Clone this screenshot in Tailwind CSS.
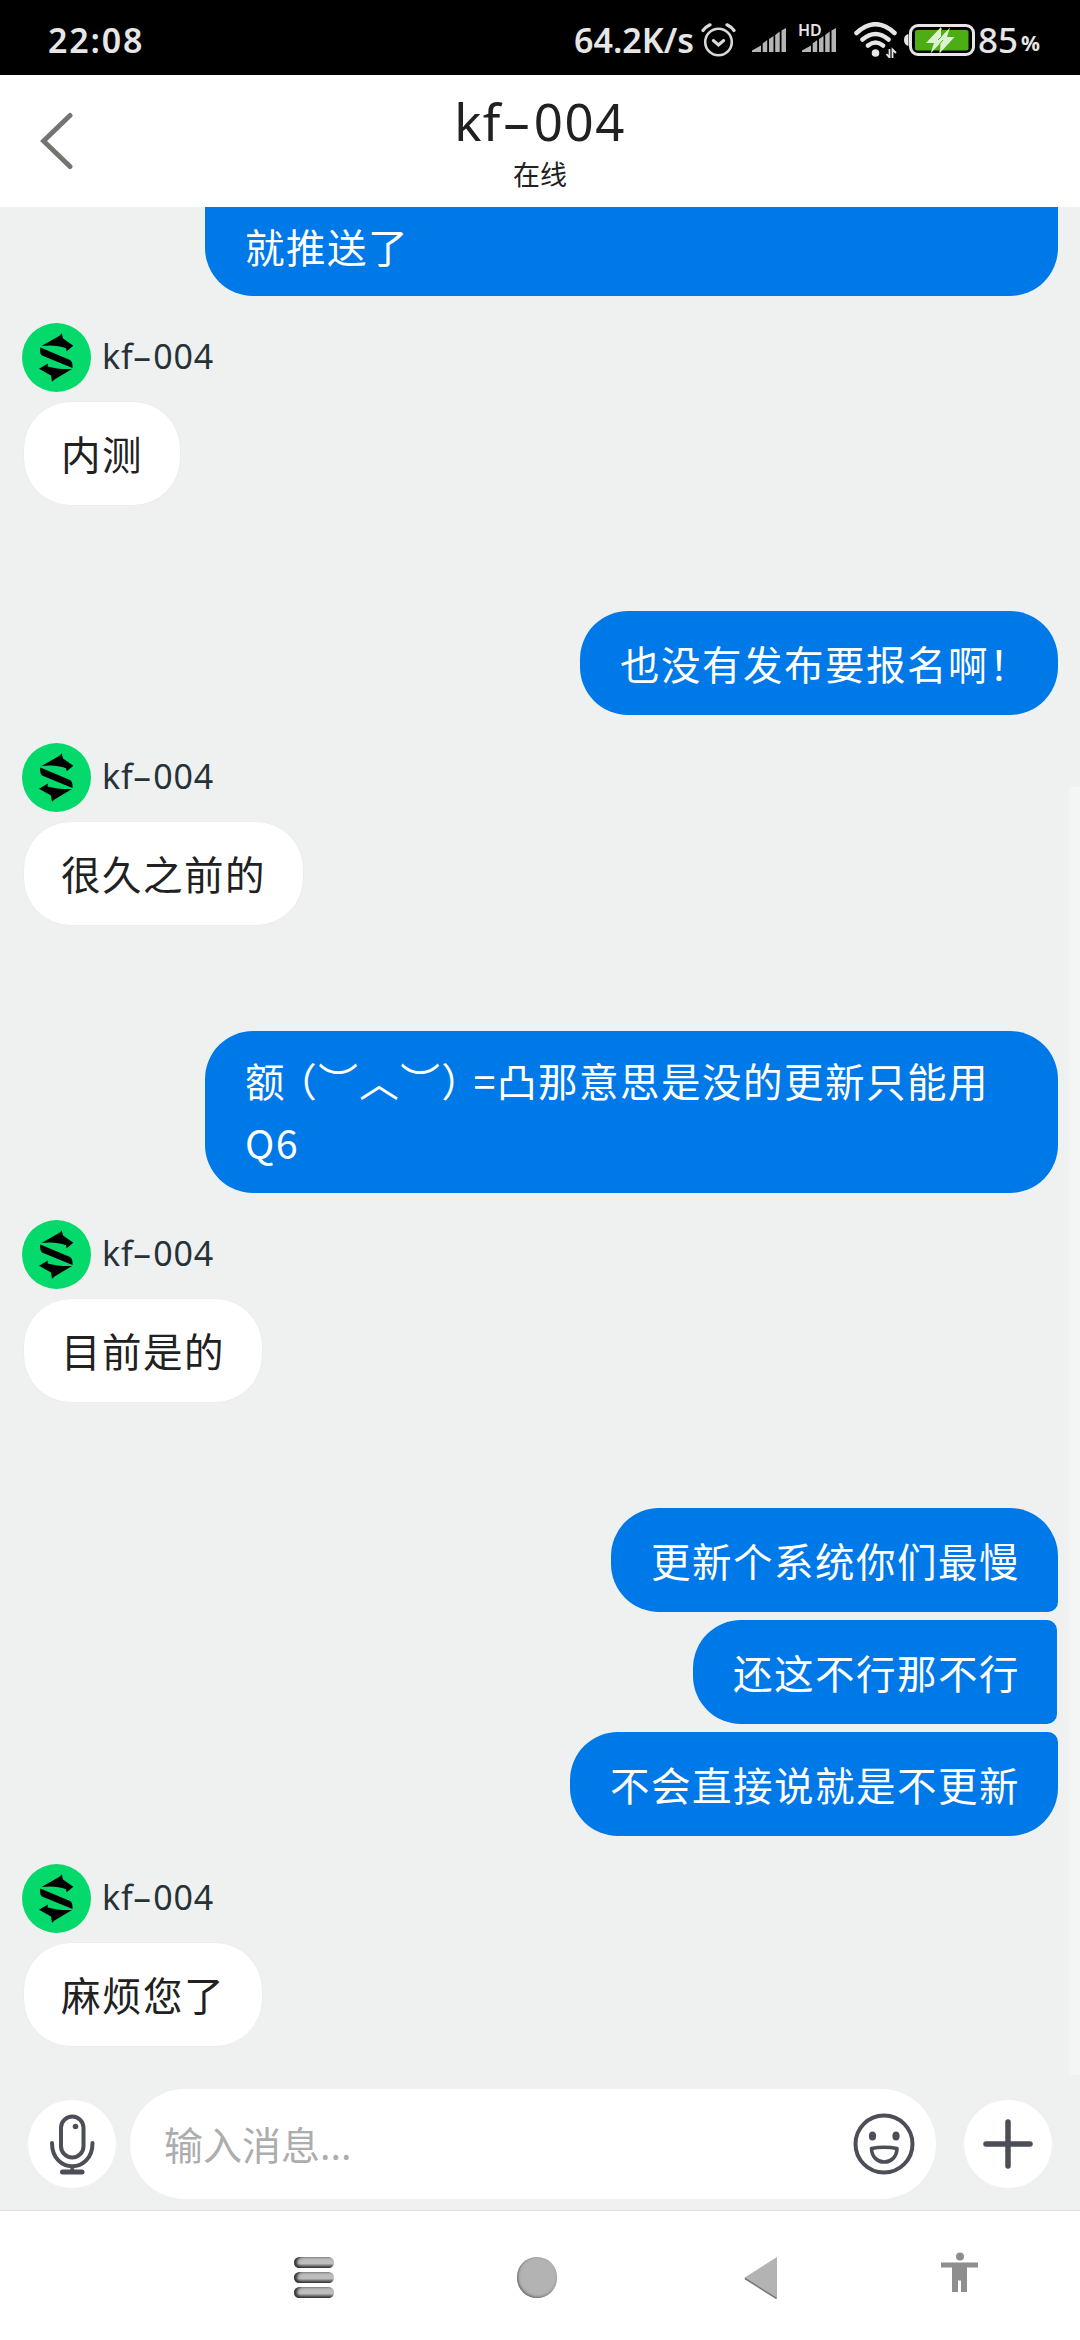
<!DOCTYPE html>
<html lang="zh-CN">

<head>
    <meta charset="UTF-8">
    <meta name="viewport" content="width=device-width, initial-scale=1.0">
    <title>kf-004</title>
    <script src="https://cdn.jsdelivr.net/npm/@tailwindcss/browser@4"></script>
</head>

<body class="bg-white font-['Noto_Sans','Noto_Sans_CJK_SC',sans-serif] text-[#212121]">
    <!-- Shared shapes -->
    <svg class="hidden">
        <symbol id="avatar" viewBox="0 0 69 69">
            <circle cx="34.5" cy="34.5" r="34.5" fill="#04d96b" />
            <path d="M19.500 23L38 12.500L39.700 10.300L41 15.500L51.300 22.700L44.700 28.300L44 25.300Q34 21.500 19.500 23ZM18.300 24.500L48 37Q51 39 50.500 45L20 32.500Q17.500 30.500 18.300 24.500ZM17 45.700L26 40.500L25.500 43.500Q36 46.500 50 46L32.500 56.500L30 58.700L29 52.500Z" />
        </symbol>
        <symbol id="signal" viewBox="0 0 34 24">
            <path fill="#b5b5b5" d="M0 24V22.500L9 17.500V24ZM10.700 24V15.500L15.200 12V24ZM17 24V11L21.500 8V24ZM23.200 24V7L27.700 3.500V24ZM29.500 24V2.500L34 0V24Z" />
        </symbol>
    </svg>

    <div id="app" class="flex h-[2340px] w-[1080px] flex-col overflow-hidden">
        <!-- Status bar -->
        <div class="flex h-[75px] shrink-0 items-center bg-black pt-[5px] pl-[48px] text-[34px] text-[#e6e6e6]">
            <span class="w-[526px] font-semibold tracking-[1.8px]">22:08</span>
            <span class="w-[127px] font-semibold whitespace-nowrap">64.2K/s</span>
            <svg class="h-[36px] w-[36px]" viewBox="0 0 36 36" fill="none" stroke="#d9d9d9" stroke-width="2.600" stroke-linecap="round">
                <circle cx="17.500" cy="20" r="13.300" />
                <path stroke-width="3" d="M12.300 18.500L17.500 23L22.700 18.500" />
                <path stroke-width="3.200" d="M2 8.500Q4.500 5 9 2.800M33 8.500Q30.500 5 26 2.800" />
            </svg>
            <svg class="ml-[15px] h-[24px] w-[34px]"><use href="#signal" /></svg>
            <div class="relative ml-[16px]">
                <svg class="h-[24px] w-[34px]"><use href="#signal" /></svg>
                <span class="absolute -top-[6px] -left-[4px] text-[16px] leading-none font-semibold">HD</span>
            </div>
            <svg class="ml-[17px] h-[36px] w-[46px]" viewBox="0 0 46 36" fill="none" stroke="#e6e6e6" stroke-width="4.500" stroke-linecap="round">
                <path d="M3.500 11Q22.500 -6.500 41.500 11M9.500 17.500Q22.500 6.500 35.500 17.500M15 23.500Q22.500 17.500 30 23.500" />
                <circle cx="22.500" cy="31" r="3.800" fill="#e6e6e6" stroke="none" />
                <path stroke-width="1.800" stroke-linecap="butt" d="M36.500 27V35.500L33.500 32M39.500 36V27.500L43 31" />
            </svg>
            <svg class="ml-[5px] h-[32px] w-[71px]" viewBox="0 0 71 32">
                <path fill="#e6e6e6" d="M4.500 10V22Q0 21 0 16T4.500 10Z" />
                <rect x="6.500" y="1.500" width="63" height="29" rx="7.500" fill="none" stroke="#e6e6e6" stroke-width="3" />
                <rect x="11" y="6" width="53.500" height="20.500" rx="2" fill="#4cae14" />
                <path fill="#dcf2d0" d="M37 3L22 19H30L26.500 29.500L36 19.500L35.500 29.500L50.500 13H43L46 3.500L37.500 12.500Z" />
                <path stroke="#4cae14" stroke-width="1" fill="none" d="M37.500 4V12.500L34 16M35.500 28L36 19.500L39 16" />
            </svg>
            <span class="ml-[3px] w-[43px] text-[35px] font-medium">85</span>
            <span class="mt-[7px] text-[21px] font-bold">%</span>
        </div>

        <!-- Header -->
        <div class="relative flex h-[132px] shrink-0 items-center justify-center bg-white">
            <svg class="absolute top-[37px] left-[40px] h-[58px] w-[34px]" viewBox="0 0 34 58" fill="none" stroke="#75756f" stroke-width="5" stroke-linecap="round">
                <path d="M30 3.500L3.500 29L30 54.500" />
            </svg>
            <div class="flex flex-col items-center">
                <h1 class="-mt-[2px] text-[51px] leading-[68px] tracking-[1.5px]">kf<span class="mx-[7px] inline-block scale-x-[1.8]">-</span>004</h1>
                <p class="mt-[2px] text-[27px] leading-[36px]">在线</p>
            </div>
        </div>

        <!-- Messages -->
        <div class="relative flex h-[1882px] shrink-0 flex-col items-start bg-[#eff1f1] pr-[22px] pl-[22px] font-['Noto_Sans_CJK_SC',sans-serif] text-[39.5px] leading-[61px] tracking-[1.5px] whitespace-nowrap">
            <div class="h-[89px] w-[853px] self-end rounded-b-[48px] bg-[#0079e8] px-[40px] pt-[8px] text-white">就推送了</div>

            <div class="mt-[27px] flex items-center gap-[11px] font-['Noto_Sans'] text-[34px] text-[#263238]">
                <svg class="h-[69px] w-[69px]"><use href="#avatar" /></svg>
                <span class="-mt-[2px] tracking-[0.8px]">kf<span class="mx-[4px] inline-block scale-x-[1.8]">-</span>004</span>
            </div>
            <div class="mt-[9px] ml-[1px] h-[105px] rounded-[48px] border border-[#ebecec] bg-white px-[37px] py-[20px]">内测</div>

            <div class="mt-[105px] h-[104px] w-[478px] self-end rounded-[48px] bg-[#0079e8] px-[40px] py-[21px] text-white">也没有发布要报名啊！</div>

            <div class="mt-[28px] flex items-center gap-[11px] font-['Noto_Sans'] text-[34px] text-[#263238]">
                <svg class="h-[69px] w-[69px]"><use href="#avatar" /></svg>
                <span class="-mt-[2px] tracking-[0.8px]">kf<span class="mx-[4px] inline-block scale-x-[1.8]">-</span>004</span>
            </div>
            <div class="mt-[9px] ml-[1px] h-[105px] rounded-[48px] border border-[#ebecec] bg-white px-[37px] py-[20px]">很久之前的</div>

            <div class="mt-[105px] h-[162px] w-[853px] self-end rounded-[48px] bg-[#0079e8] px-[40px] py-[18px] leading-[62px] text-white">额<span class="ml-[11px] [font-feature-settings:'halt']">（</span>︶︿︶<span class="mr-[11px] [font-feature-settings:'halt']">）</span>=凸那意思是没的更新只能用<br>Q6</div>

            <div class="mt-[27px] flex items-center gap-[11px] font-['Noto_Sans'] text-[34px] text-[#263238]">
                <svg class="h-[69px] w-[69px]"><use href="#avatar" /></svg>
                <span class="-mt-[2px] tracking-[0.8px]">kf<span class="mx-[4px] inline-block scale-x-[1.8]">-</span>004</span>
            </div>
            <div class="mt-[9px] ml-[1px] h-[105px] rounded-[48px] border border-[#ebecec] bg-white px-[37px] py-[20px]">目前是的</div>

            <div class="mt-[105px] flex flex-col items-end gap-[8px] self-end text-white">
                <div class="h-[104px] rounded-[48px] rounded-br-[10px] bg-[#0079e8] pr-[38px] pl-[40px] py-[21px]">更新个系统你们最慢</div>
                <div class="mr-px h-[104px] rounded-l-[48px] rounded-r-[10px] bg-[#0079e8] pr-[37px] pl-[40px] py-[21px]">还这不行那不行</div>
                <div class="h-[104px] rounded-[48px] rounded-tr-[10px] bg-[#0079e8] pr-[38px] pl-[40px] py-[21px]">不会直接说就是不更新</div>
            </div>

            <div class="mt-[28px] flex items-center gap-[11px] font-['Noto_Sans'] text-[34px] text-[#263238]">
                <svg class="h-[69px] w-[69px]"><use href="#avatar" /></svg>
                <span class="-mt-[2px] tracking-[0.8px]">kf<span class="mx-[4px] inline-block scale-x-[1.8]">-</span>004</span>
            </div>
            <div class="mt-[9px] ml-[1px] h-[105px] rounded-[48px] border border-[#ebecec] bg-white px-[37px] py-[20px]">麻烦您了</div>

            <!-- Scrollbar -->
            <div class="absolute top-[580px] right-0 h-[1288px] w-[11px] bg-[#f4f6f6]"></div>
        </div>

        <!-- Input bar -->
        <div class="flex h-[122px] shrink-0 items-center border-b border-[#e0e0e0] bg-[#eff1f1] pb-[11px] pl-[28px]">
            <button class="flex h-[88px] w-[88px] items-center justify-center rounded-full bg-white">
                <svg class="h-[62px] w-[46px]" viewBox="0 0 46 62" fill="none" stroke="#4c4e58" stroke-width="4" stroke-linecap="round">
                    <rect x="12" y="3.500" width="22.500" height="41" rx="11.250" />
                    <path d="M3 30C3 61 43.500 61 43.500 30M23.200 54V59" />
                    <path stroke-width="5" d="M13.500 59H33" />
                    <circle cx="26.500" cy="13.500" r="2.800" fill="#4c4e58" stroke="none" />
                </svg>
            </button>
            <div class="ml-[14px] flex h-[110px] w-[806px] items-center justify-between rounded-full bg-white pr-[21px] pl-[34px]">
                <span class="font-['Noto_Sans_CJK_SC',sans-serif] text-[39px] text-[#adadad]">输入消息<span class="font-['Noto_Sans']">...</span></span>
                <svg class="h-[62px] w-[62px]" viewBox="0 0 62 62" fill="none" stroke="#4c4e58" stroke-width="4">
                    <circle cx="31" cy="31" r="28.500" />
                    <path stroke-width="3.600" stroke-linejoin="round" d="M18.500 35.500Q31 33 44 35.500C43.500 53.500 19 53.500 18.500 35.500Z" />
                    <ellipse cx="19.500" cy="23" rx="3.600" ry="4.500" fill="#4c4e58" stroke="none" />
                    <ellipse cx="43" cy="23" rx="3.600" ry="4.500" fill="#4c4e58" stroke="none" />
                </svg>
            </div>
            <button class="ml-[28px] flex h-[88px] w-[88px] items-center justify-center rounded-full bg-white">
                <svg class="h-[50px] w-[50px]" viewBox="0 0 50 50" fill="none" stroke="#4c4e58" stroke-width="5.500" stroke-linecap="round">
                    <path d="M25 3V47M3 25H47" />
                </svg>
            </button>
        </div>

        <!-- Navigation bar -->
        <div class="flex h-[129px] items-start bg-white pt-[46px] pl-[294px]">
            <div class="flex w-[40px] flex-col gap-[4px]">
                <div class="h-[11px] rounded-full bg-linear-to-b from-[#bdbdbd] from-60% to-[#333333] shadow-[inset_3px_0_3px_#333333]"></div>
                <div class="h-[11px] rounded-full bg-linear-to-b from-[#bdbdbd] from-60% to-[#333333] shadow-[inset_3px_0_3px_#333333]"></div>
                <div class="h-[11px] rounded-full bg-linear-to-b from-[#bdbdbd] from-60% to-[#333333] shadow-[inset_3px_0_3px_#333333]"></div>
            </div>
            <div class="ml-[183px] h-[41px] w-[40px] rounded-full bg-[#b3b3b3] shadow-[inset_1px_-1px_3px_#666666]"></div>
            <svg class="ml-[187px] h-[42px] w-[33px]" viewBox="0 0 33 42">
                <path fill="#b3b3b3" d="M0 21L33 0V42Z" />
                <path fill="none" stroke="#777777" stroke-width="1.500" d="M1 21.500L32.500 41.500" />
            </svg>
            <svg class="-mt-[5px] ml-[164px] h-[41px] w-[37px]" viewBox="0 0 37 41" fill="#8e8e8e">
                <circle cx="19" cy="4.500" r="4" />
                <path d="M0 10.500H37V15.500H26V40H20V28.500H17V40H11V15.500H0Z" />
            </svg>
        </div>
    </div>
</body>

</html>
